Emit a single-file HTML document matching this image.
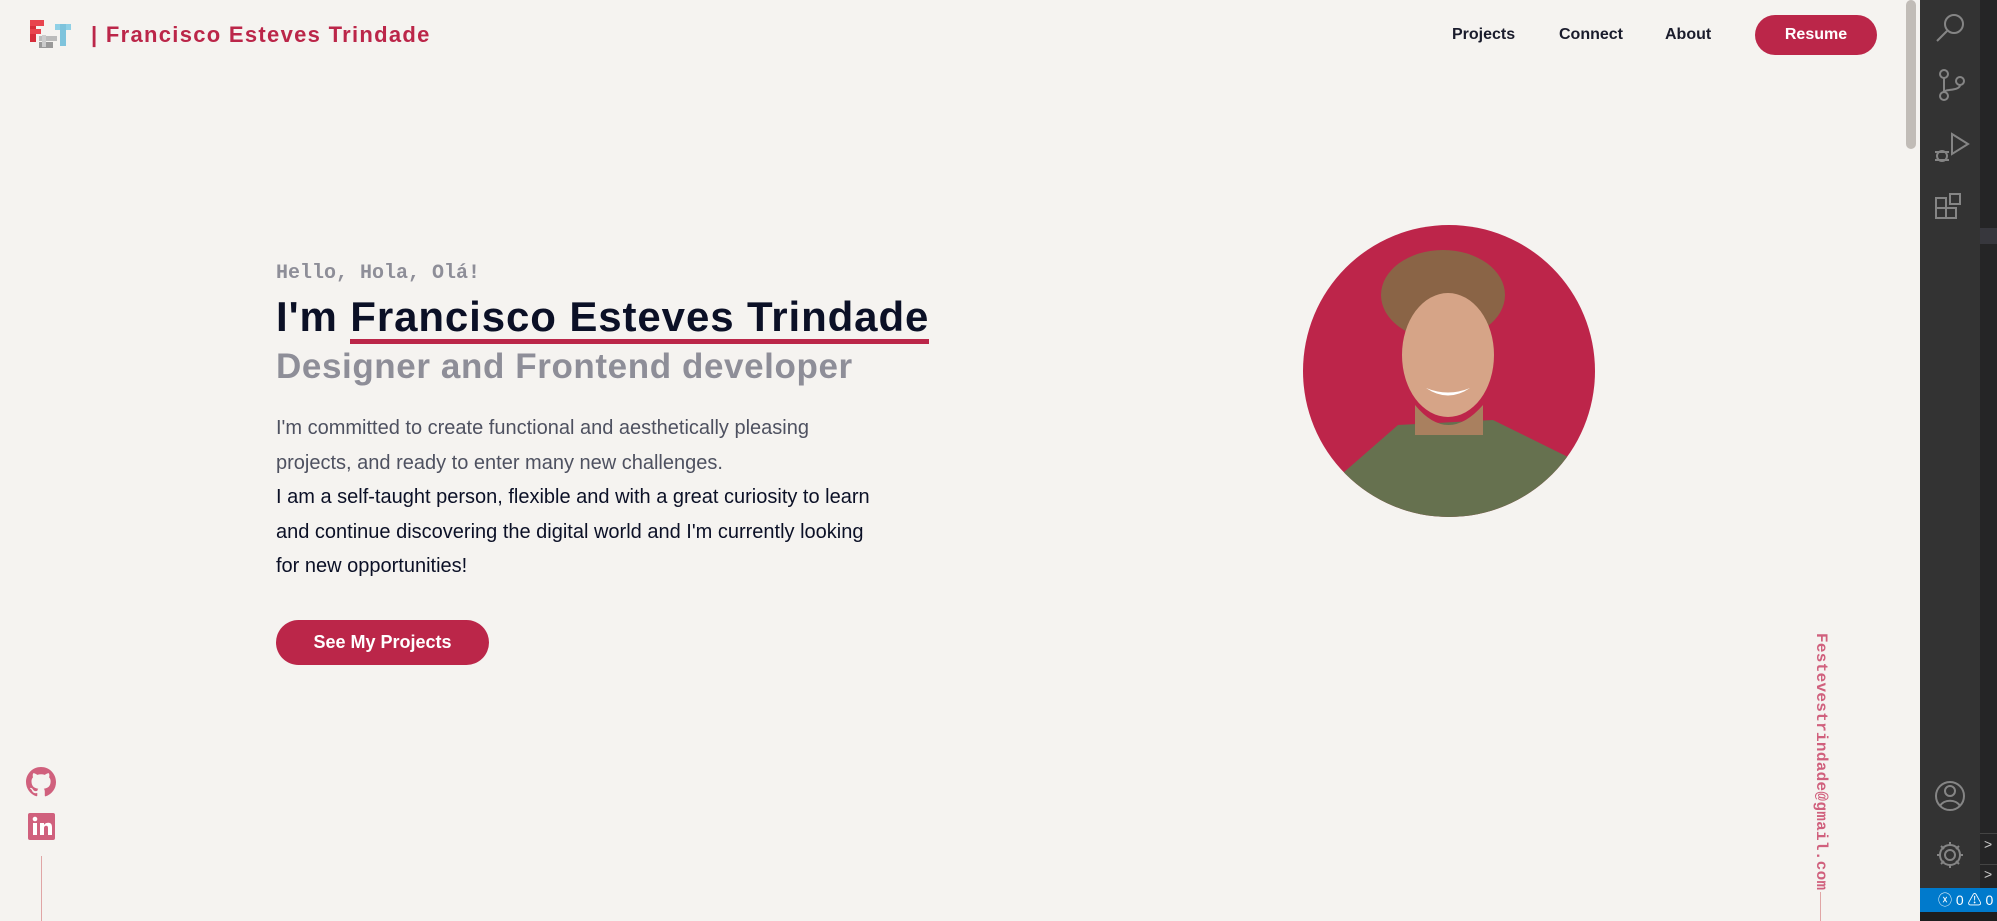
<!DOCTYPE html>
<html><head><meta charset="utf-8"><style>
*{margin:0;padding:0;box-sizing:border-box}
body{width:1997px;height:921px;overflow:hidden;background:#f5f3f0;font-family:"Liberation Sans",sans-serif;position:relative}
.a{position:absolute}
.nav{font-size:16px;font-weight:bold;color:#1a1c2c;top:26px}
</style></head><body>
<svg class="a" style="left:28px;top:18px" width="46" height="34" viewBox="0 0 46 34">
<rect x="2" y="2" width="6" height="22" fill="#d62d3a"/><rect x="2" y="2" width="14" height="6" fill="#e8444e"/><rect x="2" y="11" width="11" height="5" fill="#e8444e"/>
<rect x="11" y="18" width="18" height="5" fill="#bbb"/><rect x="11" y="24" width="14" height="6" fill="#999"/><rect x="14" y="17" width="4" height="12" fill="#ccc"/>
<rect x="27" y="6" width="16" height="6" fill="#8fd0e6"/><rect x="32" y="6" width="6" height="22" fill="#7ec3dc"/>
</svg>
<div class="a" style="left:91px;top:22px;font-size:22px;font-weight:bold;color:#bb2649;letter-spacing:1.3px">| Francisco Esteves Trindade</div>
<div class="a nav" style="left:1452px">Projects</div>
<div class="a nav" style="left:1559px">Connect</div>
<div class="a nav" style="left:1665px">About</div>
<div class="a" style="left:1755px;top:15px;width:122px;height:40px;border-radius:20px;background:#bb2649;color:#fff;font-size:16px;font-weight:bold;text-align:center;line-height:40px">Resume</div>

<div class="a" style="left:276px;top:262px;font-family:'Liberation Mono',monospace;font-weight:bold;font-size:20px;color:#8e8e98">Hello, Hola, Olá!</div>
<div class="a" style="left:276px;top:293px;font-size:42px;font-weight:900;color:#0b1026;white-space:nowrap;letter-spacing:0.9px">I'm <span style="border-bottom:5px solid #bb2649;line-height:44px;display:inline-block">Francisco Esteves Trindade</span></div>
<div class="a" style="left:276px;top:347px;font-size:35px;font-weight:bold;color:#8e8e98;white-space:nowrap;letter-spacing:0.6px">Designer and Frontend developer</div>
<div class="a" style="left:276px;top:411px;white-space:nowrap;font-size:20px;line-height:34.5px;color:#4e5160">I'm committed to create functional and aesthetically pleasing<br>projects, and ready to enter many new challenges.<br><span style="color:#0b1026">I am a self-taught person, flexible and with a great curiosity to learn<br>and continue discovering the digital world and I'm currently looking<br>for new opportunities!</span></div>
<div class="a" style="left:276px;top:620px;width:213px;height:45px;border-radius:23px;background:#bb2649;color:#fff;font-size:18px;font-weight:bold;text-align:center;line-height:45px">See My Projects</div>

<svg class="a" style="left:1303px;top:225px" width="292" height="292" viewBox="0 0 292 292">
<defs><clipPath id="c"><circle cx="146" cy="146" r="146"/></clipPath></defs>
<circle cx="146" cy="146" r="146" fill="#bd254a"/>
<g clip-path="url(#c)">
<path d="M40 248 L95 200 L190 195 L265 232 L265 292 L40 292Z" fill="#66714f"/>
<ellipse cx="140" cy="70" rx="62" ry="45" fill="#8a6446"/>
<ellipse cx="145" cy="130" rx="46" ry="62" fill="#d6a487"/>
<path d="M112 180 Q145 220 180 180 L180 210 L112 210Z" fill="#a9805f"/>
<path d="M123 163 Q145 178 167 163 Q145 172 123 163Z" fill="#fff"/>
</g></svg>

<svg class="a" style="left:26px;top:767px" width="30" height="30" viewBox="0 0 16 16"><path fill="#d0607d" d="M8 0C3.58 0 0 3.58 0 8c0 3.54 2.29 6.530 5.47 7.59.4.07.55-.17.55-.38v-1.33c-2.230.48-2.7-1.07-2.7-1.07-.36-.92-.89-1.17-.89-1.17-.73-.5.06-.49.06-.49.8.06 1.23.82 1.23.82.72 1.22 1.88.87 2.34.67.07-.52.28-.87.51-1.07-1.78-.2-3.64-.89-3.64-3.95 0-.87.31-1.590.82-2.15-.08-.2-.36-1.02.08-2.12 0 0 .67-.21 2.2.82a7.6 7.6 0 0 1 4 0c1.53-1.04 2.2-.82 2.2-.82.44 1.1.16 1.92.08 2.12.51.56.82 1.27.82 2.15 0 3.07-1.87 3.75-3.65 3.95.29.25.54.73.54 1.48v2.2c0 .21.15.46.55.38A8 8 0 0 0 16 8c0-4.42-3.58-8-8-8z"/></svg>
<svg class="a" style="left:28px;top:813px" width="27" height="27" viewBox="0 0 27 27"><rect width="27" height="27" rx="2" fill="#d0607d"/><rect x="5" y="10" width="4" height="12" fill="#fff"/><circle cx="7" cy="6" r="2.3" fill="#fff"/><path d="M12 10h4v2c1-2 3-2.3 4.5-2.3 2.5 0 3.5 1.8 3.5 4.5V22h-4v-7c0-1.5-.5-2.3-1.8-2.3S16 13.5 16 15v7h-4z" fill="#fff"/></svg>
<div class="a" style="left:41px;top:856px;width:1px;height:65px;background:#e0a5a5"></div>

<div class="a" style="left:1806px;top:633px;width:24px;height:256px;writing-mode:vertical-rl;font-family:'Liberation Mono',monospace;font-weight:bold;font-size:16px;color:#d0607d;letter-spacing:0.3px">Festevestrindade@gmail.com</div>
<div class="a" style="left:1820px;top:892px;width:1px;height:29px;background:#e0a5a5"></div>

<div class="a" style="left:1906px;top:0;width:10px;height:149px;border-radius:5px;background:#c1bcb7"></div>

<div class="a" style="left:1920px;top:0;width:60px;height:888px;background:#333333"></div>
<div class="a" style="left:1980px;top:0;width:17px;height:888px;background:#252526"></div>
<div class="a" style="left:1980px;top:228px;width:17px;height:16px;background:#37373d"></div>
<div class="a" style="left:1980px;top:833px;width:17px;height:1px;background:#444"></div>
<div class="a" style="left:1980px;top:864px;width:17px;height:1px;background:#444"></div>
<div class="a" style="left:1984px;top:836px;color:#ccc;font-size:14px">&gt;</div>
<div class="a" style="left:1984px;top:866px;color:#ccc;font-size:14px">&gt;</div>
<div class="a" style="left:1920px;top:888px;width:77px;height:24px;background:#007acc;color:#fff;font-size:14px;line-height:24px;padding-left:18px">ⓧ 0 ⚠ 0</div>
<div class="a" style="left:1920px;top:912px;width:77px;height:9px;background:#1e1e1e"></div>
<svg class="a" style="left:1920px;top:0" width="60" height="888" viewBox="0 0 60 888" fill="none" stroke="#858585" stroke-width="2">
<circle cx="34" cy="24" r="9"/><path d="M27 31 L17 41"/>
<circle cx="24" cy="74" r="4"/><circle cx="24" cy="96" r="4"/><circle cx="40" cy="81" r="4"/><path d="M24 78v14M40 85c0 6-16 4-16 7"/>
<path d="M32 134l16 10-16 10z"/><circle cx="22" cy="156" r="5"/><path d="M15 152h14M15 160h14"/>
<rect x="16" y="198" width="10" height="10"/><rect x="16" y="208" width="10" height="10"/><rect x="26" y="208" width="10" height="10"/><rect x="30" y="194" width="10" height="10"/>
<circle cx="30" cy="796" r="14"/><circle cx="30" cy="791" r="5"/><path d="M20 806c4-7 16-7 20 0"/>
<circle cx="30" cy="855" r="5"/><path d="M30 842v4M30 864v4M17 855h4M39 855h4M21 846l3 3M36 861l3 3M21 864l3-3M36 849l3-3"/><circle cx="30" cy="855" r="10"/>
</svg>
</body></html>
